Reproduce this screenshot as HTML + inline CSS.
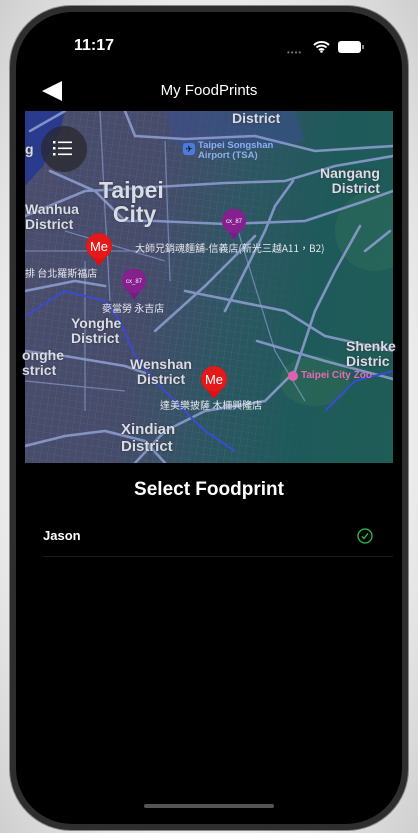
<!DOCTYPE html>
<html><head><meta charset="utf-8"><style>
*{margin:0;padding:0;box-sizing:border-box}
body{width:418px;height:833px;overflow:hidden;background:radial-gradient(ellipse at center,#f4f4f4 60%,#cfcfcf 100%);font-family:"Liberation Sans","Noto Sans CJK TC",sans-serif;position:relative}
.phone{position:absolute;left:9px;top:5px;width:400px;height:826px;border-radius:62px;background:#2e2e2e;border:1px solid #888}
.screen{position:absolute;left:16px;top:12px;width:386px;height:812px;border-radius:56px;background:#000;overflow:hidden}
.a{position:absolute;white-space:nowrap}
.lbl{position:absolute;color:#d8dce8;font-weight:bold;white-space:nowrap;text-shadow:0 0 2px #333}
.cjk{position:absolute;color:#e8e8ee;font-size:10px;white-space:nowrap;font-family:"Noto Sans CJK TC",sans-serif}
</style></head><body>
<div class="phone"></div>
<div class="screen"></div>
<div class="a" style="left:74px;top:37px;color:#fff;font-size:16px;font-weight:bold">11:17</div>
<div class="a" style="left:287px;top:48px;color:#777;font-size:8px;letter-spacing:1px">••••</div>
<svg class="a" style="left:313px;top:40px" width="17" height="13" viewBox="0 0 17 13"><path d="M1 5a11 11 0 0 1 15 0M3.5 7.5a7.5 7.5 0 0 1 10 0M6 10a3.5 3.5 0 0 1 5 0" stroke="#fff" stroke-width="2" fill="none"/><circle cx="8.5" cy="11.5" r="1.3" fill="#fff"/></svg>
<div class="a" style="left:338px;top:41px;width:23px;height:12px;border-radius:3px;background:#fff"></div>
<div class="a" style="left:362px;top:45px;width:2px;height:4px;background:#888"></div>
<svg class="a" style="left:42px;top:81px" width="20" height="20"><path d="M0 10L20 0V20Z" fill="#fff"/></svg>
<div class="a" style="left:0;width:418px;text-align:center;top:82px;color:#fff;font-size:15px">My FoodPrints</div>

<div class="a" style="left:25px;top:111px;width:368px;height:352px;overflow:hidden;background:linear-gradient(100deg,#4b4d6c 0%,#454c6a 35%,#2d5662 55%,#1e5a5a 75%,#1f5d57 100%)">
<svg width="368" height="352" style="position:absolute;left:0;top:0">
<defs><pattern id="g" width="7" height="7" patternUnits="userSpaceOnUse" patternTransform="rotate(8)"><path d="M0 0H7M0 0V7" stroke="#7a80a8" stroke-width=".6" opacity=".45"/></pattern>
<linearGradient id="fade" x1="0" x2="1"><stop offset="0" stop-color="#fff"/><stop offset=".55" stop-color="#fff"/><stop offset=".8" stop-color="#000"/></linearGradient>
<mask id="m"><rect width="368" height="352" fill="url(#fade)"/></mask></defs>
<rect width="368" height="352" fill="url(#g)" mask="url(#m)"/>
<path d="M0 75 L18 55 L35 20 L40 0 L0 0Z" fill="#2a3b8e"/>
<path d="M140 0 L270 0 L280 30 L220 40 L150 35Z" fill="#3a4f8a" opacity=".6"/>
<ellipse cx="350" cy="120" rx="40" ry="40" fill="#2b6b5a" opacity=".6"/>
<ellipse cx="290" cy="270" rx="35" ry="25" fill="#2e6a55" opacity=".6"/>
<g stroke="#8a9bcc" fill="none" stroke-width="2.6" stroke-linecap="round" opacity=".9">
<path d="M0 105 L60 80 L100 78 L130 76 L200 72 L260 70 L310 55 L368 45"/>
<path d="M100 0 L110 25 L160 28 L230 25 L290 40 L368 35"/>
<path d="M25 60 L70 80 L100 110 L130 110 L200 113 L280 110 L340 90 L368 80"/>
<path d="M5 20 L40 0"/>
<path d="M200 200 L240 120 L250 95 L268 70"/>
<path d="M130 220 L180 175 L200 155 L230 125"/>
<path d="M160 180 L260 200 L300 225 L368 240"/>
<path d="M335 115 L310 160 L290 200 L270 260 L240 290 L180 300 L140 320 L110 352"/>
<path d="M0 335 L40 325 L80 320 L120 330 L140 352"/>
<path d="M0 240 L40 245 L100 255 L120 262"/>
<path d="M365 120 L340 140"/>
<path d="M232 230 L300 250 L368 268"/>
<path d="M0 180 L50 170 L80 175"/>
</g>
<g stroke="#8fa3d4" fill="none" stroke-width="1.3" opacity=".6">
<path d="M75 0 L80 100 L85 190"/><path d="M140 30 L145 170"/><path d="M40 120 L140 150"/><path d="M0 140 L120 140"/><path d="M210 110 L250 240 L280 290"/><path d="M60 150 L60 300"/><path d="M0 270 L100 280"/>
</g>
<g stroke="#3a4bcf" fill="none" stroke-width="2">
<path d="M0 205 L40 180 L80 190 L95 210 L110 245 L130 270 L160 300 L180 320 L210 340"/>
<path d="M300 300 L330 270 L368 260"/>
</g>
</svg>
<div style="position:absolute;left:16px;top:15px;width:46px;height:46px;border-radius:50%;background:rgba(40,40,45,.75)"></div>
<svg style="position:absolute;left:28px;top:28px" width="22" height="20"><g fill="#fff"><rect x="0" y="2" width="2.5" height="2.5"/><rect x="5" y="2.5" width="14" height="1.6"/><rect x="0" y="8" width="2.5" height="2.5"/><rect x="5" y="8.5" width="14" height="1.6"/><rect x="0" y="14" width="2.5" height="2.5"/><rect x="5" y="14.5" width="14" height="1.6"/></g></svg>
</div>

<div class="lbl" style="left:232px;top:110px;font-size:14px">District</div>
<div class="a" style="left:183px;top:143px;width:12px;height:12px;border-radius:3px;background:#4a7ce0;color:#111;font-size:9px;text-align:center;line-height:12px">✈</div>
<div class="a" style="left:198px;top:141px;color:#8ab0f0;font-size:9.5px;line-height:10px;font-weight:bold">Taipei Songshan<br>Airport (TSA)</div>
<div class="lbl" style="left:25px;top:141px;font-size:14px">g</div>
<div class="lbl" style="left:99px;top:178px;font-size:23px;line-height:24px;text-align:center">Taipei<br>&nbsp;City</div>
<div class="lbl" style="left:320px;top:166px;font-size:14px;line-height:15px;text-align:right">Nangang<br>District</div>
<div class="lbl" style="left:25px;top:202px;font-size:14px;line-height:15px">Wanhua<br>District</div>
<div class="lbl" style="left:71px;top:316px;font-size:14px;line-height:15px">Yonghe<br>District</div>
<div class="lbl" style="left:22px;top:348px;font-size:14px;line-height:15px">onghe<br>strict</div>
<div class="lbl" style="left:130px;top:357px;font-size:14px;line-height:15px;text-align:center">Wenshan<br>District</div>
<div class="lbl" style="left:121px;top:421px;font-size:15px;line-height:17px">Xindian<br>District</div>
<div class="lbl" style="left:346px;top:339px;font-size:14px;line-height:15px">Shenke<br>Distric</div>
<div class="a" style="left:288px;top:371px;width:10px;height:10px;border-radius:50%;background:#e060b0"></div>
<div class="a" style="left:301px;top:370px;color:#e56ab8;font-size:10px;font-weight:bold">Taipei City Zoo</div>

<div class="cjk" style="left:135px;top:240px">大師兄銷魂麵舖-信義店(新光三越A11，B2)</div>
<div class="cjk" style="left:25px;top:265px">排 台北羅斯福店</div>
<div class="cjk" style="left:102px;top:300px">麥當勞 永吉店</div>
<div class="cjk" style="left:160px;top:397px">達美樂披薩 木柵興隆店</div>

<svg class="a" style="left:85px;top:233px" width="28" height="34"><path d="M14 33L7 24A13 13 0 1 1 21 24Z" fill="#e01010"/><circle cx="14" cy="13" r="12.5" fill="#e41a1a"/><text x="14" y="18" fill="#fff" font-size="13" text-anchor="middle" font-family="Liberation Sans">Me</text></svg>
<svg class="a" style="left:200px;top:366px" width="28" height="34"><path d="M14 33L7 24A13 13 0 1 1 21 24Z" fill="#e01010"/><circle cx="14" cy="13" r="12.5" fill="#e41a1a"/><text x="14" y="18" fill="#fff" font-size="13" text-anchor="middle" font-family="Liberation Sans">Me</text></svg>
<svg class="a" style="left:221px;top:209px" width="26" height="32"><path d="M13 31L7 22A12 12 0 1 1 19 22Z" fill="#7a1a8a"/><circle cx="13" cy="12" r="12" fill="#86208f"/><text x="13" y="14" fill="#fff" font-size="6" text-anchor="middle" font-family="Liberation Sans">cx_87</text></svg>
<svg class="a" style="left:121px;top:269px" width="26" height="32"><path d="M13 31L7 22A12 12 0 1 1 19 22Z" fill="#7a1a8a"/><circle cx="13" cy="12" r="12" fill="#86208f"/><text x="13" y="14" fill="#fff" font-size="6" text-anchor="middle" font-family="Liberation Sans">cx_87</text></svg>

<div class="a" style="left:0;width:418px;text-align:center;top:479px;color:#fff;font-size:19px;font-weight:bold">Select Foodprint</div>
<div class="a" style="left:43px;top:528px;color:#fff;font-size:13px;font-weight:bold">Jason</div>
<svg class="a" style="left:357px;top:528px" width="16" height="16"><circle cx="8" cy="8" r="7" stroke="#2ec24a" stroke-width="1.3" fill="none"/><path d="M4.8 8.3L7 10.5L11 5.3" stroke="#2ec24a" stroke-width="1.3" fill="none"/></svg>
<div class="a" style="left:43px;top:556px;width:350px;height:1px;background:#1c1c1c"></div>
<div class="a" style="left:144px;top:804px;width:130px;height:4px;border-radius:2px;background:#555"></div>
</body></html>
